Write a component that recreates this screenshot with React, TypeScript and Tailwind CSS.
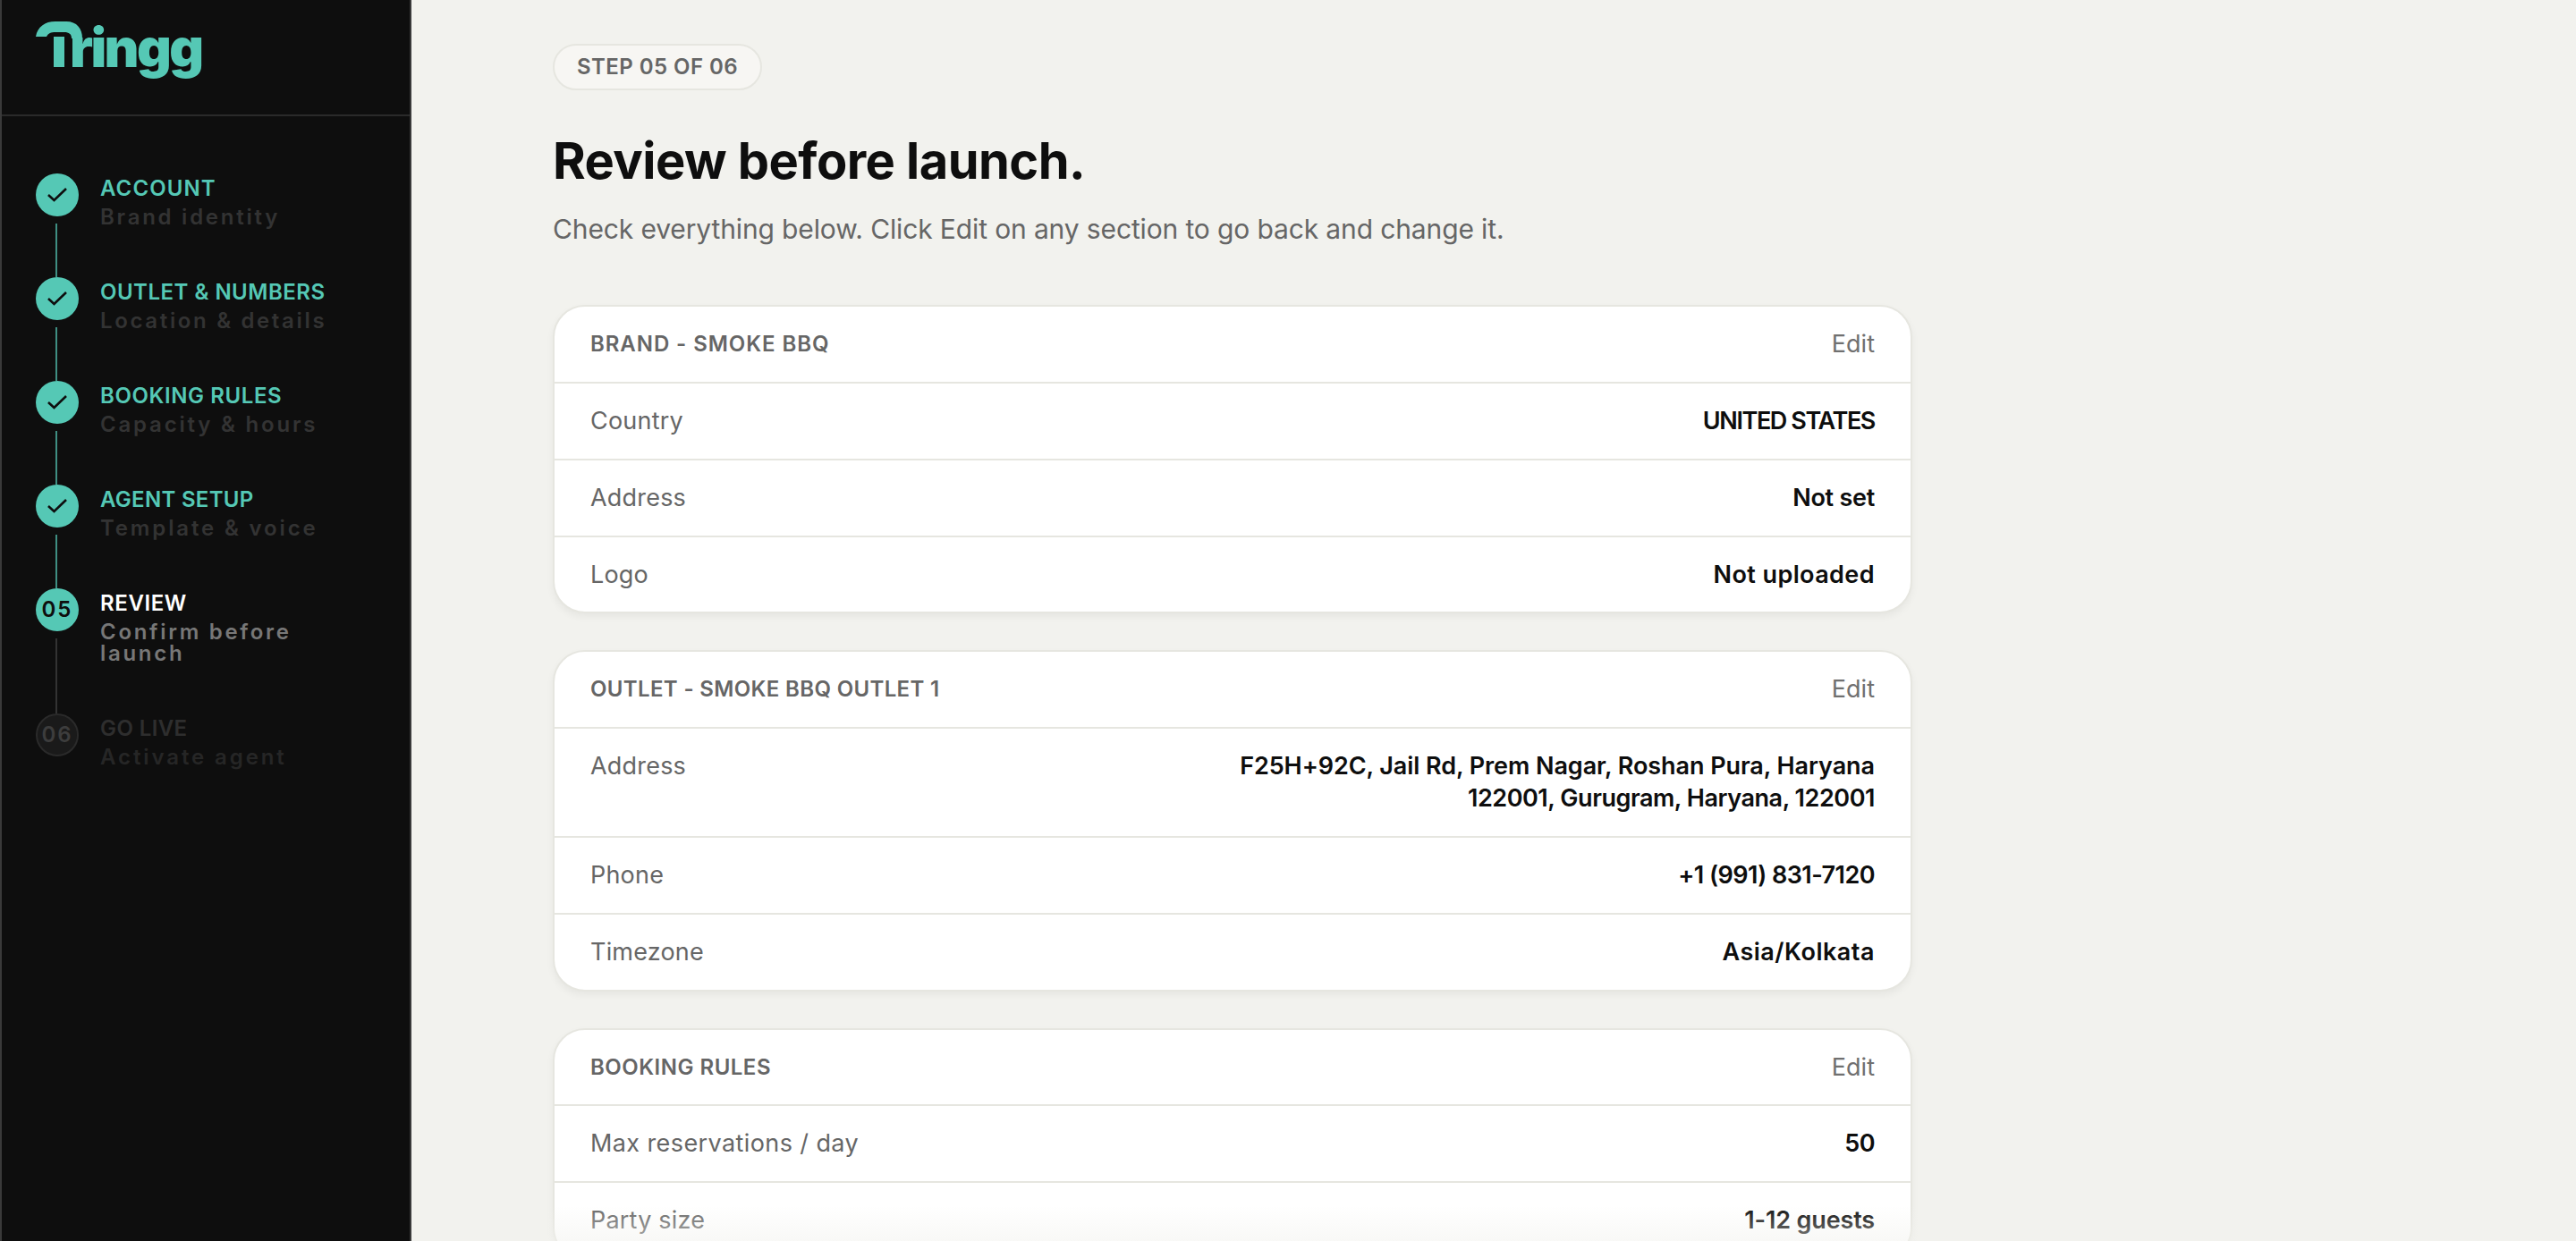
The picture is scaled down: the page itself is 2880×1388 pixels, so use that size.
import React from "react";

const sans = "font-['Inter','Liberation_Sans',sans-serif]";

function Check() {
  return (
    <svg width="24" height="18" viewBox="0 0 24 18" fill="none" className="block">
      <path d="M2 9l6.5 6L22 2" stroke="#0e0e0e" strokeWidth="2.6" />
    </svg>
  );
}

type Step = {
  title: string;
  sub: string;
  state: "done" | "active" | "todo";
  num?: string;
  titleClass: string;
  subClass: string;
};

const steps: Step[] = [
  { title: "ACCOUNT", sub: "Brand identity", state: "done", titleClass: "tracking-[1.1px]", subClass: "tracking-[2.75px]" },
  { title: "OUTLET & NUMBERS", sub: "Location & details", state: "done", titleClass: "tracking-[0.5px]", subClass: "tracking-[2.65px]" },
  { title: "BOOKING RULES", sub: "Capacity & hours", state: "done", titleClass: "tracking-[0.6px]", subClass: "tracking-[2.8px]" },
  { title: "AGENT SETUP", sub: "Template & voice", state: "done", titleClass: "tracking-[0.3px]", subClass: "tracking-[2.85px]" },
  { title: "REVIEW", sub: "Confirm before launch", state: "active", num: "05", titleClass: "tracking-[0.6px]", subClass: "tracking-[2.7px]" },
  { title: "GO LIVE", sub: "Activate agent", state: "todo", num: "06", titleClass: "tracking-[0.4px]", subClass: "tracking-[2.9px]" },
];

function StepRow({ s, last }: { s: Step; last: boolean }) {
  const circle =
    s.state === "todo"
      ? "bg-[#1a1a1a] border-2 border-[#2a2a2a] text-[#3d3d3d]"
      : "bg-[#55c8b5] text-[#0e0e0e]";
  const titleColor =
    s.state === "done" ? "text-[#55c8b5]" : s.state === "active" ? "text-white" : "text-[#2e2e2e]";
  const subColor =
    s.state === "done" ? "text-[#333333]" : s.state === "active" ? "text-[#777777]" : "text-[#262626]";
  return (
    <div className="flex gap-[24px]">
      <div className="flex w-12 shrink-0 flex-col items-center">
        <div className={`flex h-12 w-12 items-center justify-center rounded-full text-[24px] font-semibold tracking-[2px] ${circle}`}>
          {s.state === "done" ? <Check /> : s.num}
        </div>
        {!last && (
          <div className={`mt-2 mr-[2px] w-[2px] flex-1 ${s.state === "done" ? "bg-[#3f8f83]" : "bg-[#333333]"}`} />
        )}
      </div>
      <div className="w-[290px] pt-[5px] pb-[55px]">
        <div className={`text-[24px] leading-[24px] font-semibold ${s.titleClass} ${titleColor}`}>{s.title}</div>
        <div className={`mt-2 text-[24px] leading-[24px] font-semibold ${s.subClass} ${subColor}`}>{s.sub}</div>
      </div>
    </div>
  );
}

type Row = { k: string; v: React.ReactNode; kc?: string; vc?: string };

function Card({ title, rows, titleClass }: { title: string; rows: Row[]; titleClass: string }) {
  return (
    <section className="mb-[41px] overflow-hidden rounded-[36px] border-2 border-[#e6e6e0] bg-white shadow-[0_4px_8px_rgba(0,0,0,0.05)]">
      <div className="flex items-center justify-between border-b-2 border-[#e6e6e0] px-10 py-6">
        <span className={`text-[24px] leading-[35.85px] font-semibold text-[#666666] ${titleClass}`}>{title}</span>
        <span className="text-[27px] leading-[35.85px] text-[#707070]">Edit</span>
      </div>
      {rows.map((r, i) => (
        <div
          key={r.k}
          className={`flex items-start justify-between px-10 py-6 text-[27px] leading-[35.85px] ${i < rows.length - 1 ? "border-b-2 border-[#e6e6e0]" : ""}`}
        >
          <span className={`text-[#666666] ${r.kc ?? "tracking-[0.2px]"}`}>{r.k}</span>
          <span className={`text-right font-semibold text-[#0e0e0e] ${r.vc ?? ""}`}>{r.v}</span>
        </div>
      ))}
    </section>
  );
}

export default function App() {
  return (
    <div className={`flex h-[1388px] w-[2880px] overflow-hidden bg-[#f2f2ee] ${sans}`}>
      <aside className="flex h-full w-[460px] shrink-0 flex-col border-x-2 border-[#3a3a3a] bg-[#0e0e0e]">
        <div className="h-[130px] shrink-0 border-b-2 border-[#2a2a2a] pt-[4px] pl-[38px]">
          <div className="flex h-[86px] items-start">
            <svg width="54" height="72" viewBox="0 0 54 72" fill="none" className="mt-[20px] shrink-0">
              <path d="M0 17C2 6 10 0 22 0H34C46 0 52 8 52 19H40C40 14 37 12 32 12H22C17 12 14 13 12 17Z" fill="#55c8b5" />
              <rect x="20" y="17" width="12" height="34" fill="#55c8b5" />
            </svg>
            <span className="mt-[13px] -ml-[16px] text-[60px] leading-[72px] font-black tracking-[-2.6px] text-[#55c8b5]">ringg</span>
          </div>
        </div>
        <div className="pt-[64px] pl-[38px]">
          {steps.map((s, i) => (
            <StepRow key={s.title} s={s} last={i === steps.length - 1} />
          ))}
        </div>
      </aside>
      <main className="relative h-full flex-1 overflow-hidden">
        <div className="w-[1520px] pt-[49px] pl-[158px] box-content">
          <div className="flex h-[52px] w-[234px] items-center justify-center rounded-full border-2 border-[#e6e6e0] bg-[#f7f6f3] text-[24px] font-semibold tracking-[0.45px] text-[#666666]">
            STEP 05 OF 06
          </div>
          <h1 className="mt-[45px] text-[56px] leading-[68px] font-bold tracking-[-0.55px] text-[#0e0e0e]">Review before launch.</h1>
          <p className="mt-[20px] text-[30px] leading-[44px] tracking-[-0.13px] text-[#666666]">Check everything below. Click Edit on any section to go back and change it.</p>
          <div className="mt-[63px]">
            <Card
              title="BRAND - SMOKE BBQ"
              titleClass="tracking-[0.93px]"
              rows={[
                { k: "Country", v: "UNITED STATES", vc: "tracking-[-1.4px]" },
                { k: "Address", v: "Not set", vc: "tracking-[-0.25px]" },
                { k: "Logo", v: "Not uploaded", vc: "tracking-[0.4px]" },
              ]}
            />
            <Card
              title="OUTLET - SMOKE BBQ OUTLET 1"
              titleClass="tracking-[0.35px]"
              rows={[
                {
                  k: "Address",
                  v: (
                    <>
                      <span className="tracking-[-0.07px]">F25H+92C, Jail Rd, Prem Nagar, Roshan Pura, Haryana</span>
                      <br />
                      <span className="tracking-[-0.45px]">122001, Gurugram, Haryana, 122001</span>
                    </>
                  ),
                },
                { k: "Phone", v: "+1 (991) 831-7120", vc: "tracking-[-0.54px]" },
                { k: "Timezone", v: "Asia/Kolkata", vc: "tracking-[0.5px]" },
              ]}
            />
            <Card
              title="BOOKING RULES"
              titleClass="tracking-[0.5px]"
              rows={[
                { k: "Max reservations / day", kc: "tracking-[0.4px]", v: "50", vc: "tracking-[-0.5px]" },
                { k: "Party size", v: "1-12 guests", vc: "tracking-[-0.15px]" },
              ]}
            />
          </div>
        </div>
        <div className="pointer-events-none absolute inset-x-0 bottom-0 h-[40px] bg-gradient-to-b from-[#f2f2ee00] to-[#f2f2ee80]" />
      </main>
    </div>
  );
}
